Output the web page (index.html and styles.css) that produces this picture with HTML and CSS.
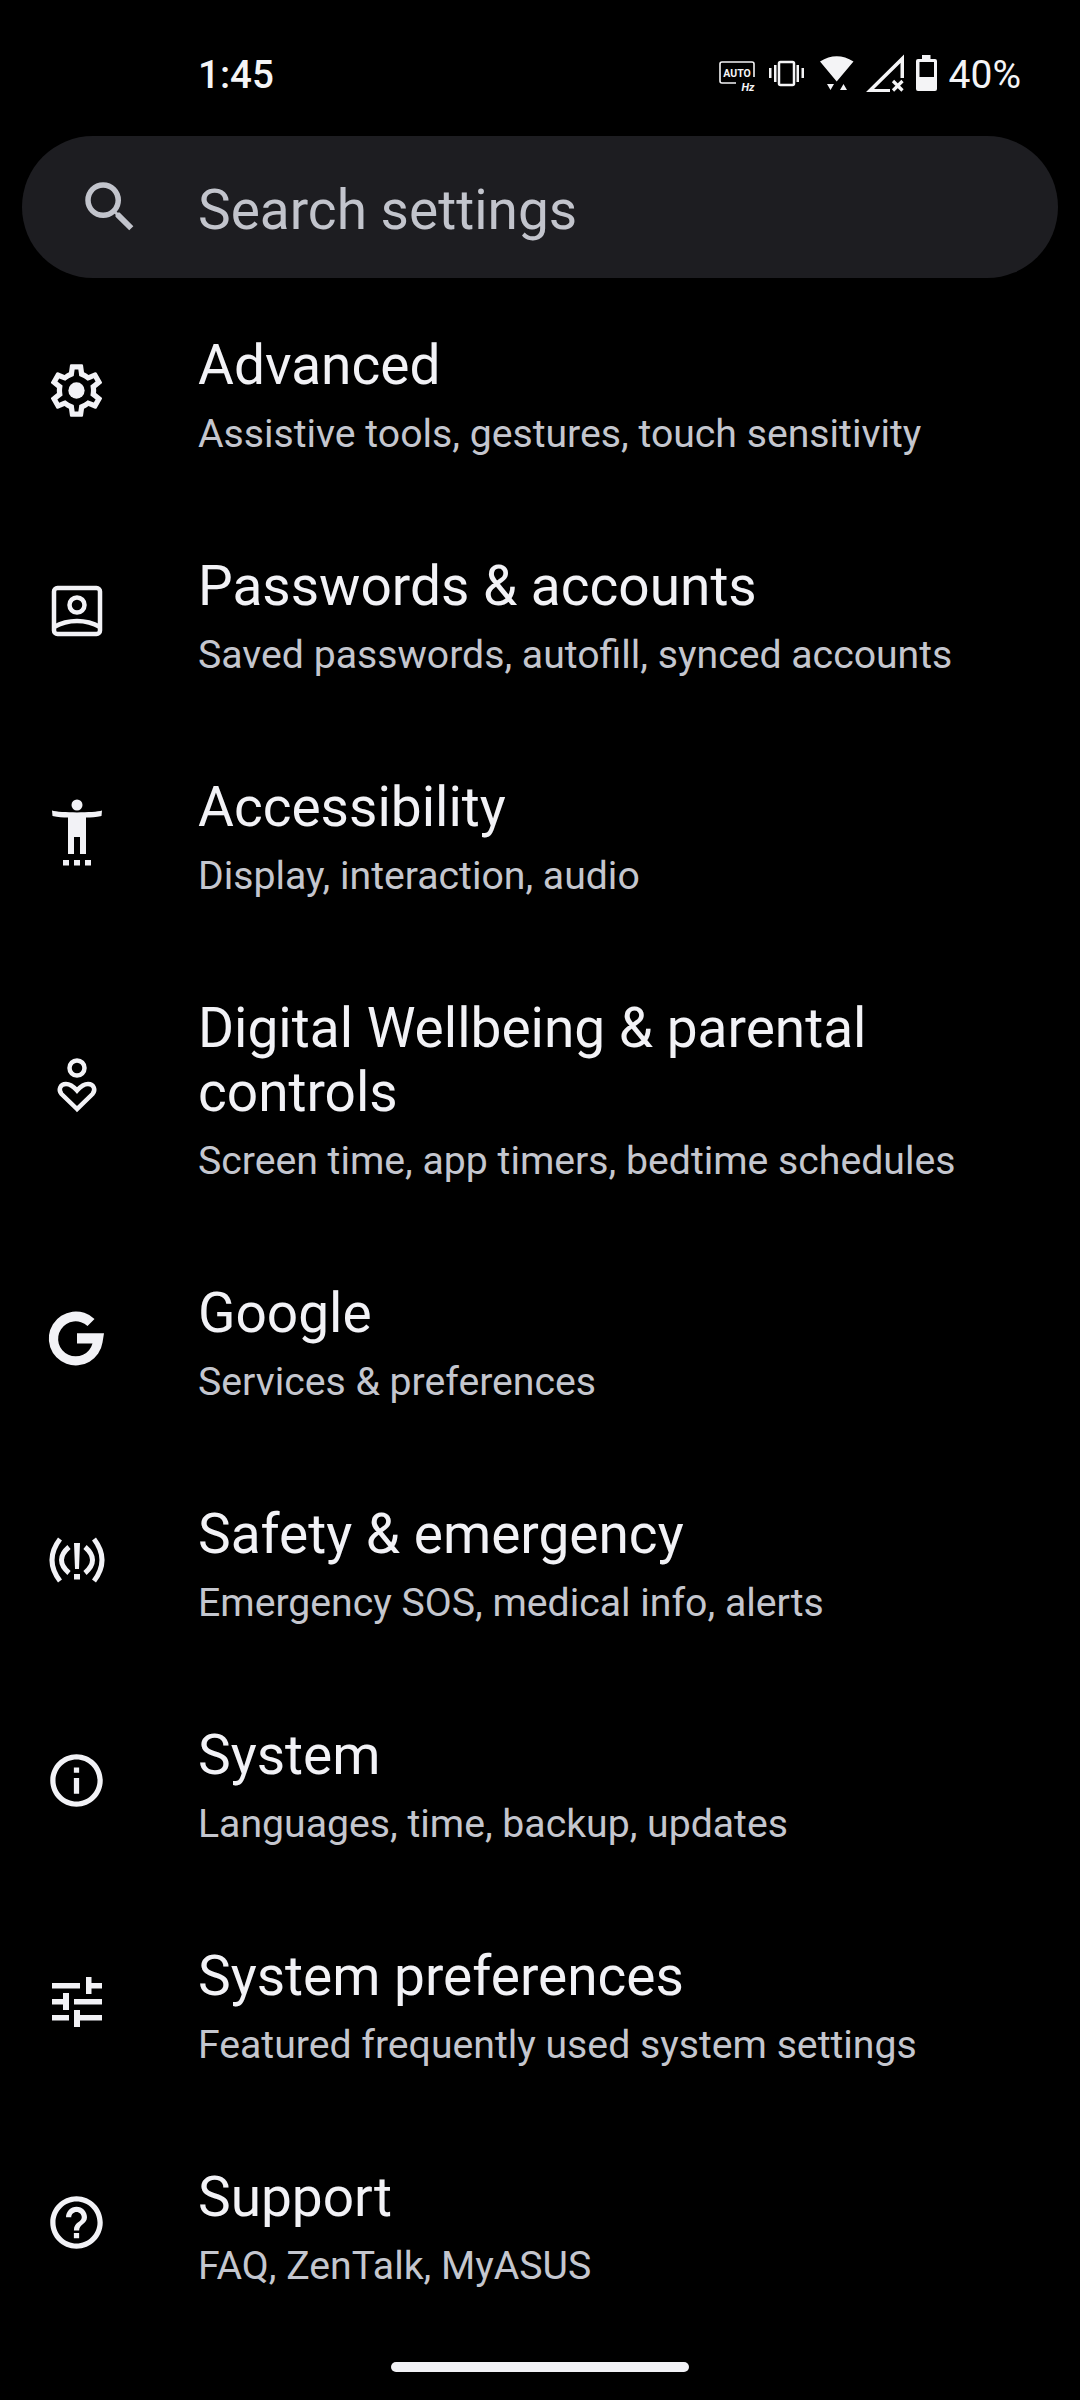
FILE: index.html
```html
<!DOCTYPE html>
<html lang="en">
<head>
<meta charset="utf-8">
<title>Settings</title>
<link rel="stylesheet" href="styles.css">
</head>
<body>
<div class="screen">
  <header class="status">
    <span class="time">1:45</span>
    <div class="status-icons">
      <svg class="si si-auto" viewBox="0 0 36 40"><path class="line" d="M35 23V10a2 2 0 0 0-2-2H3a2 2 0 0 0-2 2v17a2 2 0 0 0 2 2h14"/><text class="auto" x="18" y="23" text-anchor="middle">AUTO</text><text class="hz" x="35.5" y="37" text-anchor="end">Hz</text></svg>
      <svg class="si si-vib" viewBox="0 0 35 40"><rect class="thick" x="10" y="8" width="15" height="23" rx="1.5"/><path class="solid" d="M0 14h2.5v10H0zM5 11h2.5v17H5zM27.5 11H30v17h-2.500zM32.500 14H35v10h-2.500z"/></svg>
      <svg class="si si-wifi" viewBox="0 0 34 40"><path class="solid" d="M0 7.500Q16.700-3 33.500 7.500L16.700 27.500zM7 30h7l-3.500 6zM20 36h7l-3.500-6z"/></svg>
      <svg class="si si-sig" viewBox="0 0 38 40"><path class="solid" d="M0 38L38 .5V24h-3.500V9L8 35h16v3z"/><path class="x" d="M27 27l9.500 9.500M36.500 27L27 36.500"/></svg>
      <svg class="si si-bat" viewBox="0 0 21 40"><path class="solid" fill-rule="evenodd" d="M6 1h8.500v4H19a2 2 0 0 1 2 2v28a2 2 0 0 1-2 2H2a2 2 0 0 1-2-2V7a2 2 0 0 1 2-2h4zM3.500 8v15H18V8z"/></svg>
      <span class="pct">40%</span>
    </div>
  </header>

  <div class="search">
    <svg class="search-icon" viewBox="0 0 24 24"><path d="M15.500 14h-.79l-.28-.27A6.470 6.470 0 0 0 16 9.500 6.500 6.500 0 1 0 9.500 16c1.610 0 3.090-.59 4.230-1.570l.27.28v.79l5 4.990L20.490 19l-4.990-5zm-6 0C7.010 14 5 11.990 5 9.500S7.010 5 9.500 5 14 7.010 14 9.500 11.990 14 9.500 14z"/></svg>
    <span class="search-text">Search settings</span>
  </div>

  <main class="list">
    <div class="row">
      <svg class="icon" viewBox="0 0 24 24"><path d="M19.430 12.980c.04-.32.07-.64.07-.98 0-.34-.03-.66-.07-.98l2.110-1.650c.19-.15.24-.42.12-.64l-2-3.460c-.09-.16-.26-.25-.44-.25-.06 0-.12.01-.17.03l-2.490 1c-.52-.4-1.080-.73-1.690-.98l-.38-2.650C14.460 2.180 14.250 2 14 2h-4c-.25 0-.46.18-.49.42l-.38 2.650c-.61.25-1.170.59-1.690.98l-2.490-1c-.06-.02-.12-.03-.18-.03-.17 0-.34.09-.43.25l-2 3.460c-.13.22-.07.49.12.64l2.110 1.650c-.04.32-.07.65-.07.98 0 .33.03.66.07.98l-2.110 1.650c-.19.15-.24.42-.12.64l2 3.460c.09.16.26.25.44.25.06 0 .12-.01.17-.03l2.490-1c.52.4 1.080.73 1.690.98l.38 2.650c.03.24.24.42.49.42h4c.25 0 .46-.18.49-.42l.38-2.650c.61-.25 1.170-.59 1.690-.98l2.490 1c.06.02.12.03.18.03.17 0 .34-.09.43-.25l2-3.460c.12-.22.07-.49-.12-.64l-2.110-1.650zm-1.980-1.710c.04.31.05.52.05.73 0 .21-.02.43-.05.73l-.14 1.130.89.7 1.080.84-.7 1.210-1.270-.51-1.040-.42-.9.68c-.43.32-.84.56-1.250.73l-1.060.43-.16 1.130-.2 1.350h-1.400l-.19-1.350-.16-1.130-1.060-.43c-.43-.18-.83-.41-1.230-.71l-.91-.7-1.060.43-1.270.51-.7-1.210 1.080-.84.89-.7-.14-1.130c-.03-.31-.05-.54-.05-.74s.02-.43.05-.73l.14-1.130-.89-.7-1.080-.84.7-1.210 1.270.51 1.040.42.9-.68c.43-.32.84-.56 1.250-.73l1.060-.43.16-1.130.2-1.350h1.390l.19 1.350.16 1.130 1.060.43c.43.18.83.41 1.230.71l.91.7 1.060-.43 1.270-.51.7 1.210-1.070.85-.89.7.14 1.130z"/><circle cx="12" cy="12" r="3.100"/></svg>
      <div class="text"><div class="title">Advanced</div><div class="sub">Assistive tools, gestures, touch sensitivity</div></div>
    </div>
    <div class="row">
      <svg class="icon" viewBox="-1 0 63 63"><rect class="st" x="8" y="8" width="46" height="46" rx="3.500"/><circle class="st" cx="31" cy="25" r="7.500"/><path class="st" d="M8 47C15 43 23 41 31 41S47 43 54 47"/></svg>
      <div class="text"><div class="title">Passwords &amp; accounts</div><div class="sub">Saved passwords, autofill, synced accounts</div></div>
    </div>
    <div class="row">
      <svg class="icon" viewBox="-1 0 63 63"><circle cx="31" cy="4" r="5.500"/><path d="M6 9.500C14 12 48 12 56 9.500L55.500 15C50 16 45 16.500 40 16.500V53H34V36H28V53H22V16.500C17 16.500 12 16 6.500 15z"/><path d="M17 59h6v5.500h-6zM28 59h6v5.500h-6zM39 59h6v5.500h-6z"/></svg>
      <div class="text"><div class="title">Accessibility</div><div class="sub">Display, interaction, audio</div></div>
    </div>
    <div class="row">
      <svg class="icon" viewBox="-1 0 63 63"><circle class="st" cx="31" cy="14" r="7.500"/><path class="st" d="M31 55L15.500 40C12 36 14 30 20 30C24.500 30 27 32 31 36.500C35 32 37.500 30 42 30C48 30 50 36 46.500 40z"/></svg>
      <div class="text"><div class="title">Digital Wellbeing &amp; parental controls</div><div class="sub">Screen time, app timers, bedtime schedules</div></div>
    </div>
    <div class="row">
      <span class="icon-box"><svg class="icon-g" viewBox="0 0 55 55"><path d="M45.500 8A27 27 0 1 0 53.500 31.500L55 22.300H28V32.500H43.500A17.500 17.500 0 1 1 38.500 15z"/></svg></span>
      <div class="text"><div class="title">Google</div><div class="sub">Services &amp; preferences</div></div>
    </div>
    <div class="row">
      <svg class="icon" viewBox="-1 0 63 63"><path class="st st-b" d="M14 11Q-2 32 14 53M23 19Q8 32 23 45M48 11Q64 32 48 53M39 19Q54 32 39 45"/><path d="M28 15h6l-1 26h-4zM28 46h6v5.500h-6z"/></svg>
      <div class="text"><div class="title">Safety &amp; emergency</div><div class="sub">Emergency SOS, medical info, alerts</div></div>
    </div>
    <div class="row">
      <svg class="icon" viewBox="0 0 24 24"><path d="M11 7h2v2h-2zm0 4h2v6h-2zm1-9C6.480 2 2 6.480 2 12s4.480 10 10 10 10-4.480 10-10S17.520 2 12 2zm0 18c-4.410 0-8-3.590-8-8s3.590-8 8-8 8 3.590 8 8-3.590 8-8 8z"/></svg>
      <div class="text"><div class="title">System</div><div class="sub">Languages, time, backup, updates</div></div>
    </div>
    <div class="row">
      <svg class="icon" viewBox="-1 0 63 63"><path d="M6 13h28v5.500H6zM40 7h5.500v17H40zM45.500 13H56v5.500H45.500zM28 29h28v5.500H28zM17 23h6v17h-6zM6 29h11v5.500H6zM6 45h17v5.500H6zM28 40h6v17h-6zM34 45h22v5.500H34z"/></svg>
      <div class="text"><div class="title">System preferences</div><div class="sub">Featured frequently used system settings</div></div>
    </div>
    <div class="row">
      <svg class="icon" viewBox="0 0 24 24"><path d="M11 18h2v-2h-2v2zm1-16C6.480 2 2 6.480 2 12s4.480 10 10 10 10-4.480 10-10S17.520 2 12 2zm0 18c-4.410 0-8-3.590-8-8s3.590-8 8-8 8 3.590 8 8-3.590 8-8 8zm0-14c-2.210 0-4 1.790-4 4h2c0-1.100.9-2 2-2s2 .9 2 2c0 2-3 1.750-3 5h2c0-2.250 3-2.500 3-5 0-2.210-1.790-4-4-4z"/></svg>
      <div class="text"><div class="title">Support</div><div class="sub">FAQ, ZenTalk, MyASUS</div></div>
    </div>
  </main>
  <div class="home"></div>
</div>
</body>
</html>
```
FILE: styles.css
```css
* { box-sizing: border-box; }
html, body { margin: 0; padding: 0; background: #000; }
body { font-family: Roboto, "Noto Sans", sans-serif; color: #f2f2f6; }
.screen { position: relative; width: 1080px; height: 2400px; overflow: hidden; background: #000; }

.status { display: flex; align-items: center; justify-content: space-between; height: 136px; padding: 54px 59px 42px 198px; }
.time { font-size: 38.500px; font-weight: 500; color: #f4f4f6; line-height: 40px; padding-top: 2px; }
.status-icons { display: flex; align-items: center; }
.si { display: block; height: 40px; overflow: visible; }
.si-auto { width: 36px; margin-right: 14px; }
.si-vib { width: 35px; margin-right: 16px; }
.si-wifi { width: 34px; margin-right: 12px; }
.si-sig { width: 38px; margin-right: 12px; }
.si-bat { width: 21px; margin-right: 12px; }
.pct { font-size: 39px; font-weight: 400; color: #f4f4f6; line-height: 40px; padding-top: 2px; }
.line { fill: none; stroke: #f4f4f6; stroke-width: 1.6; }
.thick { fill: none; stroke: #f4f4f6; stroke-width: 2.500; }
.solid { fill: #f4f4f6; }
.x { fill: none; stroke: #f4f4f6; stroke-width: 3.200; }
.auto { font-family: Roboto, sans-serif; font-size: 10.500px; font-weight: 700; fill: #f4f4f6; }
.hz { font-family: Roboto, sans-serif; font-size: 11px; font-weight: 700; font-style: italic; fill: #f4f4f6; }

.search { display: flex; align-items: center; gap: 55px; height: 142px; margin: 0 22px; padding-left: 55px; background: #1d1d21; border-radius: 71px; }
.search-icon { width: 66px; height: 66px; fill: #c2c4cc; flex: none; }
.search-text { font-size: 55px; line-height: 64px; color: #c2c4cc; padding-top: 5px; }

.list { display: flex; flex-direction: column; padding-top: 2px; }
.row { display: flex; align-items: center; padding-left: 45px; }
.icon { width: 63px; height: 63px; flex: none; fill: #f2f2f6; overflow: visible; }
.icon .st { fill: none; stroke: #f2f2f6; stroke-width: 4.500; }
.icon .st-b { stroke-width: 5; }
.icon-box { display: flex; align-items: center; justify-content: center; width: 63px; height: 63px; flex: none; }
.icon-g { width: 55px; height: 55px; fill: #f2f2f6; overflow: visible; }
.text { margin-left: 90px; padding: 53px 0 42px; flex: 1; }
.title { font-size: 55px; line-height: 64px; color: #f2f2f6; }
.sub { font-size: 39.200px; line-height: 50px; margin-top: 12px; color: #c4c6ce; }
.title, .sub { padding-right: 60px; }

.home { position: absolute; left: 391px; top: 2362px; width: 298px; height: 10px; border-radius: 5px; background: #f2f2f6; }
```
